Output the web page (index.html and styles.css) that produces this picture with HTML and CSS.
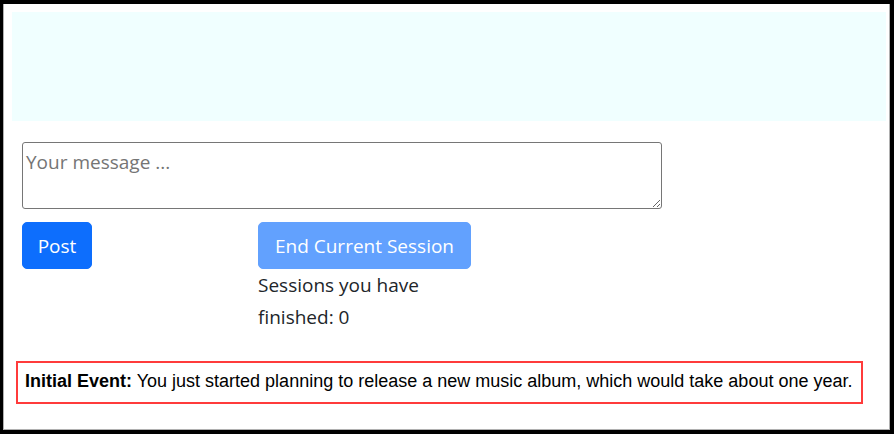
FILE: index.html
```html
<!DOCTYPE html>
<html lang="en">
<head>
<meta charset="utf-8">
<title>Session</title>
<link rel="stylesheet" href="styles.css">
</head>
<body>
<div class="frame">
  <div class="inner">
    <div class="banner"></div>
    <main class="content">
      <textarea class="message" rows="2" placeholder="Your message ..."></textarea>
      <div class="actions">
        <div class="col-post">
          <button class="btn btn-primary" type="button">Post</button>
        </div>
        <div class="col-session">
          <button class="btn btn-primary" type="button" disabled>End Current Session</button>
          <p class="sessions">Sessions you have finished: 0</p>
        </div>
      </div>
    </main>
    <div class="event"><strong>Initial Event:</strong> You just started planning to release a new music album, which would take about one year.</div>
  </div>
</div>
</body>
</html>
```

FILE: styles.css
```css
html, body {
  margin: 0;
  padding: 0;
  background: #fff;
}

.frame {
  width: 894px;
  height: 434px;
  box-sizing: border-box;
  border-style: solid;
  border-color: #000;
  border-width: 4px 4px 4px 3px;
  overflow: hidden;
}

.inner {
  height: 100%;
  box-sizing: border-box;
  border-left: 1px solid #b0b0b0;
  border-right: 1px solid #b0b0b0;
  border-bottom: 1px solid #b0b0b0;
  padding-top: 8px;
  display: flex;
  flex-direction: column;
}

.banner {
  height: 109px;
  margin: 0 3px 0 8px;
  background: #f0ffff;
}

.content {
  padding: 21px 0 0 18px;
  font-family: "Open Sans", "Noto Sans", sans-serif;
  font-size: 20px;
  line-height: 1.5;
  color: #212529;
}

.message {
  display: block;
  box-sizing: border-box;
  width: 640px;
  height: 67px;
  margin: 0;
  padding: 4px 3px 2px;
  border: 1px solid #767676;
  border-radius: 3px;
  font-family: "Open Sans", "Noto Sans", sans-serif;
  font-size: 19px;
  line-height: 30px;
  color: #212529;
  resize: both;
}

.message::placeholder {
  color: #757575;
}

.actions {
  display: grid;
  grid-template-columns: 236px 213px;
  margin-top: 13px;
}

.btn {
  display: inline-block;
  box-sizing: border-box;
  height: 47px;
  padding: 2px 15px 0;
  border: 1px solid transparent;
  border-radius: 5px;
  font-family: "Open Sans", "Noto Sans", sans-serif;
  font-size: 19px;
  line-height: 43px;
  cursor: pointer;
}

.btn-primary {
  background: #0d6efd;
  border-color: #0d6efd;
  color: #fff;
}

.btn-primary:disabled {
  background: #62a1fe;
  border-color: #62a1fe;
  cursor: default;
}

.col-post .btn {
  width: 70px;
  padding: 2px 0 0;
}

.col-session .btn {
  width: 213px;
  padding: 2px 0 0;
}

.sessions {
  margin: 0;
  width: 190px;
  font-size: 19px;
  line-height: 32px;
}

.event {
  box-sizing: border-box;
  width: 847px;
  margin: auto 0 25px 12px;
  padding: 8px 8px 10px 7px;
  border: 2px solid #ff3b3b;
  font-family: "Liberation Sans", Arial, sans-serif;
  font-size: 18px;
  line-height: 21px;
  color: #000;
}

.event strong {
  font-weight: bold;
}
```
